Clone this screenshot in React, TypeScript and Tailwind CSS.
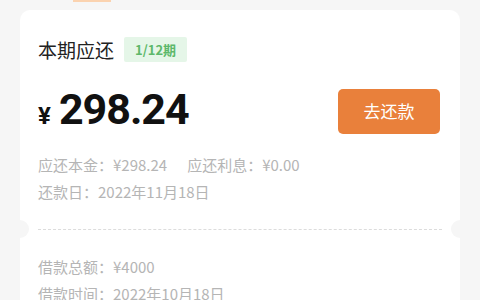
export default function App() {
  return (
    <div
      className="w-[480px] h-[300px] overflow-hidden bg-[#f6f6f6]"
      style={{ fontFamily: '"Noto Sans CJK SC", "Noto Sans", sans-serif' }}
    >
      {/* tab indicator peeking from above */}
      <div className="h-[2px] w-[38px] ml-[73px] bg-[#fbd3b0]" />

      <div className="mx-[20px] mt-[8px] rounded-t-[10px] bg-white pt-[27px] pb-6">
        <div className="px-[18px]">
          {/* title */}
          <div className="flex items-center h-[25px]">
            <span className="text-[19px] text-[#222] leading-none">本期应还</span>
            <span className="ml-[10px] h-[25px] px-[11px] flex items-center rounded-[2px] bg-[#e5f6e8] text-[13px] font-bold text-[#5db86a]">
              1/12期
            </span>
          </div>

          {/* amount + button */}
          <div className="mt-[26px] flex items-center justify-between pr-[2px]">
            <div className="flex items-baseline text-[#111]" style={{ fontFamily: 'Roboto, "Liberation Sans", sans-serif' }}>
              <span className="text-[24px] font-bold">¥</span>
              <span className="ml-[8px] text-[43px] font-bold leading-none tracking-[-1px]">298.24</span>
            </div>
            <button className="w-[102px] h-[45px] rounded-[5px] bg-[#e9803b] text-white text-[17px]">去还款</button>
          </div>

          {/* details */}
          <div className="mt-[17px] text-[15px] text-[#b5b5b5] leading-[27px]">
            <div className="flex gap-[20px]">
              <span>应还本金：¥298.24</span>
              <span>应还利息：¥0.00</span>
            </div>
            <div>还款日：2022年11月18日</div>
          </div>
        </div>

        {/* perforation */}
        <div className="relative mt-[24px] h-0">
          <div className="mx-[18px] border-t border-dashed border-[#dcdcdc]" />
          <div className="absolute -left-[9px] -top-[9px] w-[18px] h-[18px] rounded-full bg-[#f6f6f6]" />
          <div className="absolute -right-[9px] -top-[9px] w-[18px] h-[18px] rounded-full bg-[#f6f6f6]" />
        </div>

        <div className="px-[18px] mt-[24px] text-[15px] text-[#b5b5b5] leading-[27px]">
          <div>借款总额：¥4000</div>
          <div>借款时间：2022年10月18日</div>
        </div>
      </div>
    </div>
  );
}
